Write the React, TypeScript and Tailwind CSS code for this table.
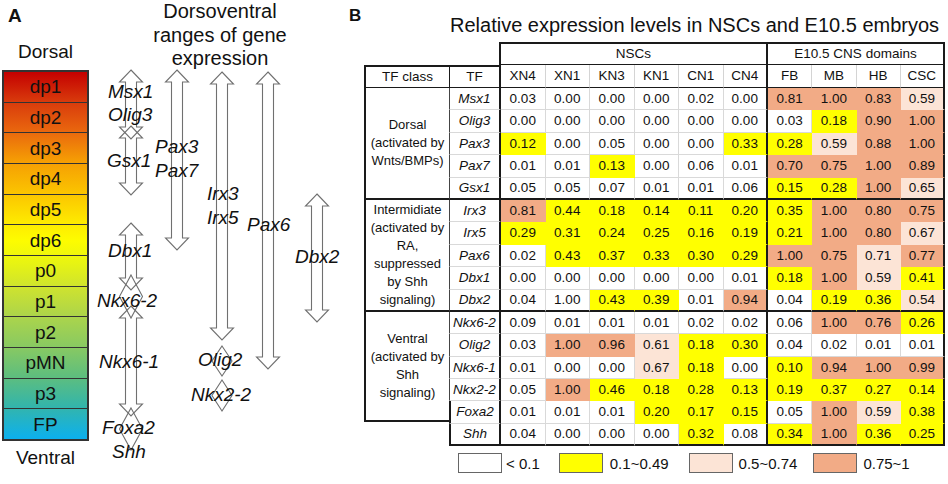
import React from 'react';

type C = 'w' | 'y' | 'p' | 's';

const COLOR: Record<C, string> = {
  w: 'bg-white border-[#d9d9d9]',
  y: 'bg-[#ffff00] border-[#ffff00]',
  p: 'bg-[#fce4d6] border-[#fce4d6]',
  s: 'bg-[#f2ab86] border-[#f2ab86]',
};

const colorOf = (v: number): C => (v < 0.1 ? 'w' : v < 0.5 ? 'y' : v < 0.75 ? 'p' : 's');

type Row = { tf: string; v: string[]; over?: Record<number, C> };

const ROWS: Row[] = [
  { tf: 'Msx1', v: ['0.03', '0.00', '0.00', '0.00', '0.02', '0.00', '0.81', '1.00', '0.83', '0.59'] },
  { tf: 'Olig3', v: ['0.00', '0.00', '0.00', '0.00', '0.00', '0.00', '0.03', '0.18', '0.90', '1.00'] },
  { tf: 'Pax3', v: ['0.12', '0.00', '0.05', '0.00', '0.00', '0.33', '0.28', '0.59', '0.88', '1.00'] },
  { tf: 'Pax7', v: ['0.01', '0.01', '0.13', '0.00', '0.06', '0.01', '0.70', '0.75', '1.00', '0.89'], over: { 6: 's' } },
  { tf: 'Gsx1', v: ['0.05', '0.05', '0.07', '0.01', '0.01', '0.06', '0.15', '0.28', '1.00', '0.65'] },
  { tf: 'Irx3', v: ['0.81', '0.44', '0.18', '0.14', '0.11', '0.20', '0.35', '1.00', '0.80', '0.75'] },
  { tf: 'Irx5', v: ['0.29', '0.31', '0.24', '0.25', '0.16', '0.19', '0.21', '1.00', '0.80', '0.67'] },
  { tf: 'Pax6', v: ['0.02', '0.43', '0.37', '0.33', '0.30', '0.29', '1.00', '0.75', '0.71', '0.77'] },
  { tf: 'Dbx1', v: ['0.00', '0.00', '0.00', '0.00', '0.00', '0.01', '0.18', '1.00', '0.59', '0.41'] },
  { tf: 'Dbx2', v: ['0.04', '1.00', '0.43', '0.39', '0.01', '0.94', '0.04', '0.19', '0.36', '0.54'], over: { 1: 'w' } },
  { tf: 'Nkx6-2', v: ['0.09', '0.01', '0.01', '0.01', '0.02', '0.02', '0.06', '1.00', '0.76', '0.26'] },
  { tf: 'Olig2', v: ['0.03', '1.00', '0.96', '0.61', '0.18', '0.30', '0.04', '0.02', '0.01', '0.01'] },
  { tf: 'Nkx6-1', v: ['0.01', '0.00', '0.00', '0.67', '0.18', '0.00', '0.10', '0.94', '1.00', '0.99'] },
  { tf: 'Nkx2-2', v: ['0.05', '1.00', '0.46', '0.18', '0.28', '0.13', '0.19', '0.37', '0.27', '0.14'] },
  { tf: 'Foxa2', v: ['0.01', '0.01', '0.01', '0.20', '0.17', '0.15', '0.05', '1.00', '0.59', '0.38'] },
  { tf: 'Shh', v: ['0.04', '0.00', '0.00', '0.00', '0.32', '0.08', '0.34', '1.00', '0.36', '0.25'] },
];

const SECTION_END = [4, 9, 15];
const NSC = ['XN4', 'XN1', 'KN3', 'KN1', 'CN1', 'CN4'];
const E10 = ['FB', 'MB', 'HB', 'CSC'];

const DOMAINS = ['dp1', 'dp2', 'dp3', 'dp4', 'dp5', 'dp6', 'p0', 'p1', 'p2', 'pMN', 'p3', 'FP'];

function dbl(cx: number, y0: number, y1: number) {
  const hw = 11.5, sw = 5.5, h = 12;
  return [
    [cx, y0], [cx + hw, y0 + h], [cx + sw, y0 + h], [cx + sw, y1 - h], [cx + hw, y1 - h], [cx, y1],
    [cx - hw, y1 - h], [cx - sw, y1 - h], [cx - sw, y0 + h], [cx - hw, y0 + h],
  ].map((p) => p.join(',')).join(' ');
}

function diamond(cx: number, y0: number, y1: number, hw: number) {
  const m = (y0 + y1) / 2;
  return `${cx},${y0} ${cx + hw},${m} ${cx},${y1} ${cx - hw},${m}`;
}

const ARROWS: [number, number, number][] = [
  [131, 70, 139],
  [131, 126, 195],
  [131, 223, 290],
  [131, 306, 416],
  [177, 70, 250],
  [222, 72, 340],
  [268, 72, 369],
  [317, 194, 322],
];

const DIAMONDS: [number, number, number, number][] = [
  [131, 275, 318, 11.5],
  [222, 346, 376, 10],
  [222, 380, 411, 10],
  [131, 408, 450, 11.5],
];

const LABELS: [string, number, number][] = [
  ['Msx1', 108, 98],
  ['Olig3', 108, 121],
  ['Gsx1', 107, 167],
  ['Pax3', 155, 153],
  ['Pax7', 155, 177],
  ['Irx3', 207, 200],
  ['Irx5', 207, 224],
  ['Pax6', 247, 231],
  ['Dbx1', 108, 257],
  ['Dbx2', 295, 263],
  ['Nkx6-2', 97, 307],
  ['Nkx6-1', 99, 368],
  ['Olig2', 198, 366],
  ['Nkx2-2', 191, 401],
  ['Foxa2', 102, 434],
  ['Shh', 112, 458],
];

function PanelA() {
  return (
    <div className="relative w-[345px] h-full shrink-0 flex">
      <div className="w-[92px] flex flex-col">
        <div className="ml-[8px] mt-[6px] h-[20px] leading-[20px] text-[19px] font-bold">A</div>
        <div className="mt-[14px] h-[24px] leading-[24px] text-[19px] text-center w-[91px]">Dorsal</div>
        <div className="mt-[6px] ml-[2px] w-[87px] h-[371px] flex flex-col border-2 border-[#333] bg-[linear-gradient(to_bottom,#c40000_0%,#d83a0c_8%,#e9660e_16%,#f59c04_24%,#fbc400_33%,#feea00_41%,#fdfc00_46%,#e8f412_52%,#cde230_59%,#aad44c_67%,#88c962_75%,#5ebe7e_83%,#34b5aa_91%,#0cb0ee_100%)]">
          {DOMAINS.map((d, i) => (
            <div
              key={d}
              className={
                i === 0
                  ? 'flex-1 flex items-center justify-center text-[19px] leading-none'
                  : 'flex-1 flex items-center justify-center text-[19px] leading-none border-t border-[#333]'
              }
            >
              {d}
            </div>
          ))}
        </div>
        <div className="mt-[5px] h-[24px] leading-[24px] text-[19px] text-center w-[91px]">Ventral</div>
      </div>
      <div className="w-[253px] pl-[3px]">
        <div className="mt-0 text-center text-[20px] leading-[23.5px]">
          Dorsoventral
          <br />
          ranges of gene
          <br />
          expression
        </div>
      </div>
      <svg className="absolute left-0 top-0 pointer-events-none" width={345} height={484} viewBox="0 0 345 484">
        {ARROWS.map(([cx, a, b], i) => (
          <polygon key={'a' + i} points={dbl(cx, a, b)} fill="none" stroke="#707070" strokeWidth={1.1} />
        ))}
        {DIAMONDS.map(([cx, a, b, hw], i) => (
          <polygon key={'d' + i} points={diamond(cx, a, b, hw)} fill="none" stroke="#707070" strokeWidth={1.1} />
        ))}
        {LABELS.map(([t, x, y]) => (
          <text key={t} x={x} y={y} fontSize={19} fontStyle="italic" fill="#111">
            {t}
          </text>
        ))}
      </svg>
    </div>
  );
}

function cellClass(c: C, col: number, end: boolean) {
  const right = col === 5 || col === 9 ? 'border-r-2 border-r-[#1a1a1a]' : 'border-r';
  const bottom = end ? 'border-b-2 border-b-[#1a1a1a]' : 'border-b';
  return `${col < 6 ? 'w-[44.5px]' : 'w-[44.25px]'} h-full flex items-center justify-center ${COLOR[c]} ${right} ${bottom}`;
}

function tfCellClass(i: number, end: boolean) {
  const left = i >= 14 ? 'border-l-2 border-l-[#1a1a1a]' : 'border-l border-l-[#444]';
  const bottom = end ? 'border-b-2 border-b-[#1a1a1a]' : 'border-b border-b-[#d9d9d9]';
  return `w-[52px] h-full flex items-center justify-center italic border-r-2 border-r-[#1a1a1a] ${left} ${bottom}`;
}

function PanelB() {
  return (
    <div className="w-[603px] h-full flex flex-col">
      <div className="flex items-start">
        <div className="ml-[4px] mt-[6px] w-[16px] h-[20px] leading-[20px] text-[17px] font-bold">B</div>
        <div className="ml-[85px] mt-[13px] h-[24px] leading-[24px] text-[20px] whitespace-nowrap">
          Relative expression levels in NSCs and E10.5 embryos
        </div>
      </div>
      <div className="ml-[19px] mt-[5px] flex flex-col text-[13.5px] leading-none">
        <div className="flex h-[23px]">
          <div className="w-[135px]" />
          <div className="w-[267px] flex items-center justify-center border-t-2 border-l-2 border-b border-[#1a1a1a]">NSCs</div>
          <div className="w-[179px] flex items-center justify-center border-t-2 border-l-2 border-r-2 border-b border-[#1a1a1a]">
            E10.5 CNS domains
          </div>
        </div>
        <div className="flex">
          <div className="w-[85px] flex flex-col">
            <div className="h-[23px] flex items-center justify-center border-t-2 border-l-2 border-b border-[#1a1a1a]">TF class</div>
            <div className="h-[112px] flex items-center justify-center text-center leading-[18px] text-[13px] border-l-2 border-b-2 border-[#1a1a1a]">
              Dorsal
              <br />
              (activated by
              <br />
              Wnts/BMPs)
            </div>
            <div className="h-[112px] flex items-center justify-center text-center leading-[18px] text-[13px] border-l-2 border-b-2 border-[#1a1a1a]">
              Intermidiate
              <br />
              (activated by
              <br />
              RA,
              <br />
              suppressed
              <br />
              by Shh
              <br />
              signaling)
            </div>
            <div className="h-[110px] flex items-center justify-center text-center leading-[18px] text-[13px] border-l-2 border-b-2 border-[#1a1a1a]">
              Ventral
              <br />
              (activated by
              <br />
              Shh
              <br />
              signaling)
            </div>
          </div>
          <div className="flex flex-col">
            <div className="flex h-[23px]">
              <div className="w-[52px] h-full flex items-center justify-center border-t-2 border-l border-r-2 border-b border-[#1a1a1a]">TF</div>
              {NSC.map((h, i) => (
                <div
                  key={h}
                  className={
                    i === 5
                      ? 'w-[44.5px] h-full flex items-center justify-center border-r-2 border-b border-[#1a1a1a]'
                      : 'w-[44.5px] h-full flex items-center justify-center border-r border-b border-[#1a1a1a] border-r-[#d4d4d4]'
                  }
                >
                  {h}
                </div>
              ))}
              {E10.map((h, i) => (
                <div
                  key={h}
                  className={
                    i === 3
                      ? 'w-[44.25px] h-full flex items-center justify-center border-r-2 border-b border-[#1a1a1a]'
                      : 'w-[44.25px] h-full flex items-center justify-center border-r border-b border-[#1a1a1a] border-r-[#d4d4d4]'
                  }
                >
                  {h}
                </div>
              ))}
            </div>
            {ROWS.map((r, i) => {
              const end = SECTION_END.includes(i);
              return (
                <div key={r.tf} className="flex h-[22.4px]">
                  <div className={tfCellClass(i, end)}>{r.tf}</div>
                  {r.v.map((v, j) => {
                    const c = r.over && r.over[j] ? r.over[j] : colorOf(parseFloat(v));
                    return (
                      <div key={j} className={cellClass(c, j, end)}>
                        {v}
                      </div>
                    );
                  })}
                </div>
              );
            })}
          </div>
        </div>
      </div>
      <div className="ml-[113px] mt-[7px] flex items-center text-[15px] leading-none">
        <div className="w-[44px] h-[20px] border border-[#666] bg-white" />
        <div className="ml-[4px]">&lt; 0.1</div>
        <div className="ml-[19px] w-[44px] h-[20px] border border-[#666] bg-[#ffff00]" />
        <div className="ml-[7px]">0.1~0.49</div>
        <div className="ml-[20px] w-[44px] h-[20px] border border-[#666] bg-[#fce4d6]" />
        <div className="ml-[6px]">0.5~0.74</div>
        <div className="ml-[16px] w-[44px] h-[20px] border border-[#666] bg-[#f2ab86]" />
        <div className="ml-[6px]">0.75~1</div>
      </div>
    </div>
  );
}

export default function App() {
  return (
    <div className="relative flex w-[948px] h-[484px] bg-white overflow-hidden text-[#111] font-['Liberation_Sans',Arial,Helvetica,sans-serif]">
      <PanelA />
      <PanelB />
    </div>
  );
}
